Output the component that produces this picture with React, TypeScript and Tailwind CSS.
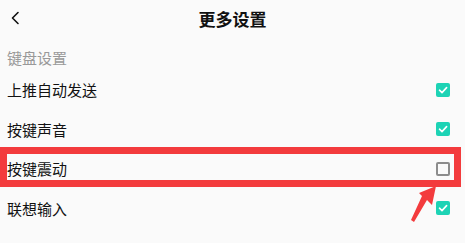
import React from "react";

const items = [
  { label: "上推自动发送", checked: true },
  { label: "按键声音", checked: true },
  { label: "按键震动", checked: false },
  { label: "联想输入", checked: true },
];

function Box({ checked }: { checked: boolean }) {
  if (!checked) {
    return <span className="block h-[14px] w-[14px] rounded-[2px] border-2 border-[#8c8c8c]" />;
  }
  return (
    <span className="flex h-[14px] w-[14px] items-center justify-center rounded-[2px] bg-[#1dd3b5]">
      <svg viewBox="0 0 14 14" className="h-[14px] w-[14px]">
        <path d="M3.5 7.2 L6 9.6 L10.6 4.6" fill="none" stroke="#fff" strokeWidth="1.6" strokeLinecap="round" strokeLinejoin="round" />
      </svg>
    </span>
  );
}

export default function App() {
  return (
    <div
      className="relative h-[243px] w-[465px] overflow-hidden bg-[#fafafa] text-[#111]"
      style={{ fontFamily: '"Noto Sans CJK SC", "Noto Sans", sans-serif' }}
    >
      <header className="relative flex h-9 items-center justify-center">
        <svg viewBox="0 0 10 14" className="absolute left-[10px] top-[11px] h-[14px] w-[10px]">
          <path d="M8 1.5 L2.5 7 L8 12.5" fill="none" stroke="#111" strokeWidth="1.6" strokeLinecap="round" strokeLinejoin="round" />
        </svg>
        <h1 className="text-[17px] font-bold leading-none">更多设置</h1>
      </header>

      <p className="mt-[9px] px-[7px] text-[15px] leading-[25px] text-[#999]">键盘设置</p>

      <ul>
        {items.map((item) => (
          <li key={item.label} className="flex h-[39.5px] items-center justify-between pl-[7px] pr-[15px]">
            <span className="text-[15px] leading-none">{item.label}</span>
            <Box checked={item.checked} />
          </li>
        ))}
      </ul>

      {/* annotation */}
      <div className="absolute left-0 top-[147px] h-[40px] w-[461px] border-[7px] border-[#f33b3d]" />
      <svg viewBox="0 0 465 243" className="pointer-events-none absolute inset-0 h-[243px] w-[465px]">
        <polygon points="436,186 432,205 427,200 414,222 411,220 422,196 419,193" fill="#f33b3d" />
      </svg>
    </div>
  );
}
